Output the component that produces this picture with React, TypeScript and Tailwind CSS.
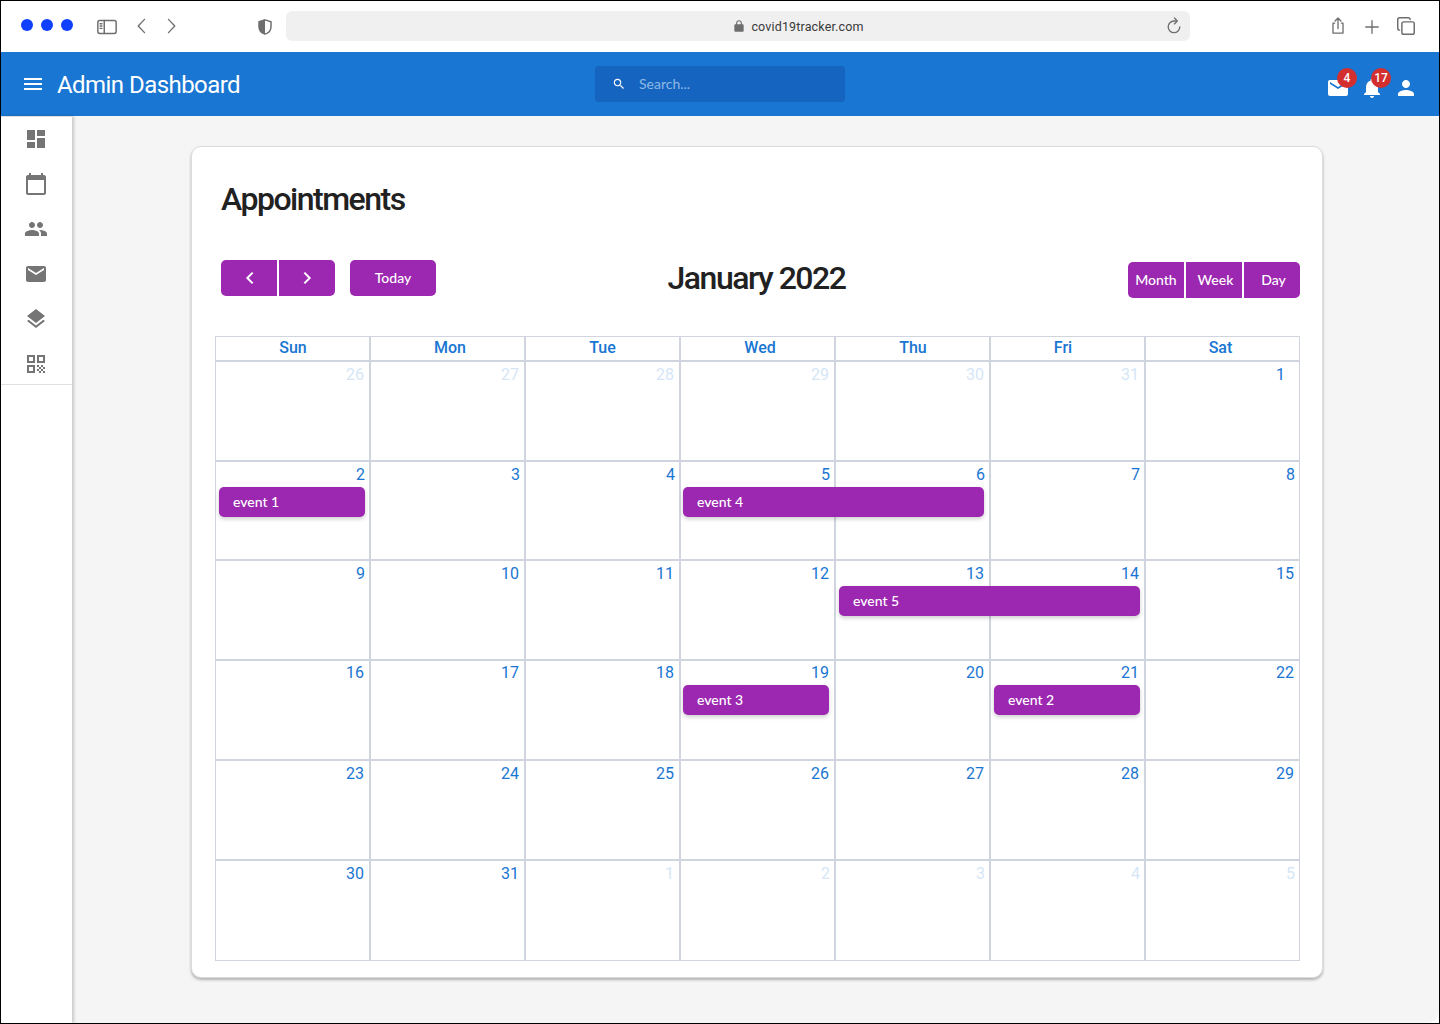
const ROBOTO = "font-['Roboto',sans-serif]"
const LATO = "font-['Lato',sans-serif]"

const ICONS = {
  dashboard: "M3 13h8V3H3v10zm0 8h8v-6H3v6zm10 0h8V11h-8v10zm0-18v6h8V3h-8z",
  calendar: "M20 3h-1V1h-2v2H7V1H5v2H4c-1.1 0-2 .9-2 2v16c0 1.1.9 2 2 2h16c1.1 0 2-.9 2-2V5c0-1.1-.9-2-2-2zm0 18H4V8h16v13z",
  people: "M16 11c1.66 0 2.99-1.34 2.99-3S17.66 5 16 5c-1.66 0-3 1.34-3 3s1.34 3 3 3zm-8 0c1.66 0 2.99-1.34 2.99-3S9.66 5 8 5C6.34 5 5 6.34 5 8s1.34 3 3 3zm0 2c-2.33 0-7 1.17-7 3.5V19h14v-2.5c0-2.33-4.67-3.5-7-3.5zm8 0c-.29 0-.62.02-.97.05 1.16.84 1.97 1.97 1.97 3.45V19h6v-2.5c0-2.33-4.67-3.5-7-3.5z",
  mail: "M20 4H4c-1.1 0-1.99.9-1.99 2L2 18c0 1.1.9 2 2 2h16c1.1 0 2-.9 2-2V6c0-1.1-.9-2-2-2zm0 4l-8 5-8-5V6l8 5 8-5v2z",
  layers: "M11.99 18.54l-7.37-5.73L3 14.07l9 7 9-7-1.63-1.27-7.38 5.74zM12 16l7.36-5.73L21 9l-9-7-9 7 1.63 1.27L12 16z",
  qr: "M3 11h8V3H3v8zm2-6h4v4H5V5zM3 21h8v-8H3v8zm2-6h4v4H5v-4zM13 3v8h8V3h-8zm6 6h-4V5h4v4zM19 19h2v2h-2zM13 13h2v2h-2zM15 15h2v2h-2zM13 17h2v2h-2zM15 19h2v2h-2zM17 17h2v2h-2zM17 13h2v2h-2zM19 15h2v2h-2z",
  bell: "M12 22c1.1 0 2-.9 2-2h-4c0 1.1.89 2 2 2zm6-6v-5c0-3.07-1.64-5.64-4.5-6.32V4c0-.83-.67-1.5-1.5-1.5s-1.5.67-1.5 1.5v.68C7.63 5.36 6 7.92 6 11v5l-2 2v1h16v-1l-2-2z",
  person: "M12 12c2.21 0 4-1.79 4-4s-1.79-4-4-4-4 1.79-4 4 1.79 4 4 4zm0 2c-2.67 0-8 1.34-8 4v2h16v-2c0-2.66-5.33-4-8-4z",
  search: "M15.5 14h-.79l-.28-.27C15.41 12.59 16 11.11 16 9.5 16 5.91 13.09 3 9.5 3S3 5.91 3 9.5 5.91 16 9.5 16c1.61 0 3.09-.59 4.23-1.57l.27.28v.79l5 4.99L20.49 19l-4.99-5zm-6 0C7.01 14 5 11.99 5 9.5S7.01 5 9.5 5 14 7.01 14 9.5 11.99 14 9.5 14z",
  menu: "M3 18h18v-2H3v2zm0-5h18v-2H3v2zm0-7v2h18V6H3z",
}

function Icon({ d, className }: { d: string; className: string }) {
  return (
    <svg viewBox="0 0 24 24" fill="currentColor" className={className}>
      <path d={d} />
    </svg>
  )
}

function Stroke({ children, className }: { children: React.ReactNode; className: string }) {
  return (
    <svg viewBox="0 0 24 24" fill="none" stroke="currentColor" strokeWidth="1.6" strokeLinecap="round" strokeLinejoin="round" className={className}>
      {children}
    </svg>
  )
}

function BrowserBar() {
  return (
    <div className="h-[51px] shrink-0 flex items-center bg-white text-[#6e6e6e]">
      <div className="flex gap-2 ml-5 -mt-1">
        <span className="w-3 h-3 rounded-full bg-[#0f40ff]" />
        <span className="w-3 h-3 rounded-full bg-[#0f40ff]" />
        <span className="w-3 h-3 rounded-full bg-[#0f40ff]" />
      </div>
      <Stroke className="w-[22px] h-[22px] ml-[23px]">
        <rect x="2" y="5" width="20" height="14" rx="2" />
        <path d="M9 5v14M4.5 8.5h2M4.5 11h2M4.5 13.5h2" />
      </Stroke>
      <Stroke className="w-[20px] h-[20px] ml-[14px] -mt-px">
        <path d="M15 4l-7.5 8 7.5 8" />
      </Stroke>
      <Stroke className="w-[20px] h-[20px] ml-[9px] -mt-px">
        <path d="M9 4l7.5 8-7.5 8" />
      </Stroke>
      <svg viewBox="0 0 24 24" className="w-[18px] h-[18px] ml-[75px]">
        <path d="M12 2.5l8 2.5v6.5c0 5-3.4 8.4-8 10-4.6-1.6-8-5-8-10V5z" fill="none" stroke="currentColor" strokeWidth="2" />
        <path d="M12 2.5l-8 2.5v6.5c0 5 3.4 8.4 8 10z" fill="currentColor" />
      </svg>
      <div className="relative w-[904px] h-[30px] ml-[12px] -mt-[1px] rounded-md bg-[#f0f0f0] flex items-center justify-center pl-[114px]">
        <svg viewBox="0 0 24 24" fill="currentColor" className="w-[14px] h-[14px] mr-[5px] ml-[6px]">
          <path d="M18 9h-1V7c0-2.76-2.24-5-5-5S7 4.24 7 7v2H6c-1.1 0-2 .9-2 2v9c0 1.1.9 2 2 2h12c1.1 0 2-.9 2-2v-9c0-1.1-.9-2-2-2zM9 9V7c0-1.66 1.34-3 3-3s3 1.34 3 3v2H9z" />
        </svg>
        <span className={`${ROBOTO} text-[12.5px] text-[#3a3a3a] tracking-[0.15px] mt-[2px]`}>covid19tracker.com</span>
        <Stroke className="absolute right-[6px] top-[5px] w-[20px] h-[20px]">
          <path d="M19 13a7 7 0 1 1-7-7h3" />
          <path d="M12.5 2.5L16 6l-3.5 3.5" />
        </Stroke>
      </div>
      <Stroke className="w-[20px] h-[20px] ml-[138px] -mt-[2px]">
        <path d="M8 8.5H6v12h12v-12h-2M12 15V2.5M8.5 6L12 2.5 15.5 6" />
      </Stroke>
      <Stroke className="w-[20px] h-[20px] ml-[14px]">
        <path d="M12 4.5v15M4.5 12h15" />
      </Stroke>
      <Stroke className="w-[22px] h-[22px] ml-[13px] -mt-[1px]">
        <rect x="7.5" y="7.5" width="13.5" height="13.5" rx="2" />
        <path d="M5 16.5c-1.2 0-2-.8-2-2V5c0-1.2.8-2 2-2h9.5c1.2 0 2 .8 2 2" />
      </Stroke>
    </div>
  )
}

function Badge({ n, className }: { n: number; className: string }) {
  return (
    <span className={`absolute ${className} min-w-5 h-5 rounded-full bg-[#d32f2f] text-white text-[12px] font-medium leading-5 text-center`}>
      {n}
    </span>
  )
}

function AppBar() {
  return (
    <div className={`h-[64px] shrink-0 flex items-center bg-[#1976d2] text-white ${ROBOTO}`}>
      <div className="w-[594px] flex items-center pl-[20px]">
        <Icon d={ICONS.menu} className="w-6 h-6" />
        <span className="ml-[12px] mt-px text-[24px] leading-8 tracking-[-0.55px]">Admin Dashboard</span>
      </div>
      <div className={`w-[250px] h-9 -mt-[1px] rounded bg-[#1565c0] flex items-center pl-[17px] ${LATO}`}>
        <Icon d={ICONS.search} className="w-[14px] h-[14px]" />
        <span className="ml-[13px] text-[14px] text-[#8fb8e6]">Search...</span>
      </div>
      <div className="relative ml-[481px] mt-[8px] w-6 h-6">
        <Icon d={ICONS.mail} className="w-6 h-6" />
        <Badge n={4} className="-top-[8px] left-[11px]" />
      </div>
      <div className="relative ml-[10px] mt-[8px] w-6 h-6">
        <Icon d={ICONS.bell} className="w-6 h-6" />
        <Badge n={17} className="-top-[8px] left-[11px]" />
      </div>
      <div className="ml-[10px] mt-[8px] w-6 h-6">
        <Icon d={ICONS.person} className="w-6 h-6" />
      </div>
    </div>
  )
}

function Sidebar() {
  const items = [ICONS.dashboard, ICONS.calendar, ICONS.people, ICONS.mail, ICONS.layers, ICONS.qr]
  return (
    <div className="w-[71px] shrink-0 bg-white shadow-[2px_0_3px_rgba(0,0,0,0.18)] border-t border-[#e0e0e0] z-10">
      <div className="flex flex-col items-center pt-[10px] pr-[2px] h-[268px] border-b border-[#e0e0e0] gap-[21px]">
        {items.map((d) => (
          <Icon key={d} d={d} className="w-6 h-6 text-[#757575]" />
        ))}
      </div>
    </div>
  )
}

function PurpleButton({ className, children }: { className: string; children: React.ReactNode }) {
  return (
    <div className={`bg-[#9c27b0] text-white flex items-center justify-center ${LATO} text-[14px] font-medium ${className}`}>
      {children}
    </div>
  )
}

type Day = { n: number; muted?: boolean; pr?: string }

const WEEKS: Day[][] = [
  [{ n: 26, muted: true }, { n: 27, muted: true }, { n: 28, muted: true }, { n: 29, muted: true }, { n: 30, muted: true }, { n: 31, muted: true }, { n: 1, pr: "pr-[14px]" }],
  [{ n: 2 }, { n: 3 }, { n: 4 }, { n: 5 }, { n: 6 }, { n: 7 }, { n: 8 }],
  [{ n: 9 }, { n: 10 }, { n: 11 }, { n: 12 }, { n: 13 }, { n: 14 }, { n: 15 }],
  [{ n: 16 }, { n: 17 }, { n: 18 }, { n: 19 }, { n: 20 }, { n: 21 }, { n: 22 }],
  [{ n: 23 }, { n: 24 }, { n: 25 }, { n: 26 }, { n: 27 }, { n: 28 }, { n: 29 }],
  [{ n: 30 }, { n: 31 }, { n: 1, muted: true, pr: "pr-[5px]" }, { n: 2, muted: true }, { n: 3, muted: true }, { n: 4, muted: true }, { n: 5, muted: true }],
]

const COLS = ["col-start-1", "col-start-2", "col-start-3", "col-start-4", "col-start-5", "col-start-6", "col-start-7"]
const TRACK = "grid-cols-[153px_155px_155px_155px_155px_155px_155px]"

const EVENTS: { week: number; title: string; col: string }[] = [
  { week: 1, title: "event 1", col: "col-start-1 col-span-1 ml-[3px] mr-[4px] mt-[25px]" },
  { week: 1, title: "event 4", col: "col-start-4 col-span-2 ml-[4px] mr-[5px] mt-[25px]" },
  { week: 2, title: "event 5", col: "col-start-5 col-span-2 ml-[5px] mr-[4px] mt-[25px]" },
  { week: 3, title: "event 3", col: "col-start-4 col-span-1 ml-[4px] mr-[5px] mt-[24px]" },
  { week: 3, title: "event 2", col: "col-start-6 col-span-1 ml-[5px] mr-[4px] mt-[24px]" },
]

const HEADS: [string, string][] = [
  ["Sun", "pl-[1px]"],
  ["Mon", "pl-[5px]"],
  ["Tue", ""],
  ["Wed", "pl-[5px]"],
  ["Thu", "pl-[1px]"],
  ["Fri", "pr-[9px]"],
  ["Sat", "pr-[4px]"],
]

function Calendar() {
  return (
    <div className={`w-[1085px] border border-[#d0d4de] ${ROBOTO} text-[#1976d2]`}>
      <div className={`grid ${TRACK} h-[25px] border-b-2 border-[#d0d4de]`}>
        {HEADS.map(([h, pad], i) => (
          <div key={h} className={`${i > 0 ? "border-l-2 border-[#d0d4de]" : ""} ${pad} text-center text-[16px] font-medium leading-[22px]`}>
            {h}
          </div>
        ))}
      </div>
      {WEEKS.map((week, w) => (
        <div key={w} className={`grid ${TRACK} ${w === 1 || w === 5 ? "h-[99px]" : "h-[100px]"} ${w < 5 ? "border-b-2 border-[#d0d4de]" : ""}`}>
          {week.map((d, i) => (
            <div
              key={i}
              className={`${COLS[i]} row-start-1 ${w === 3 ? "" : "pt-px"} text-right text-[16px] leading-[24px] ${d.pr ?? (d.n < 10 ? "pr-[4px]" : "pr-[5px]")} ${i > 0 ? "border-l-2 border-[#d0d4de]" : ""} ${d.muted ? "text-[#d5e6f7]" : ""}`}
            >
              {d.n}
            </div>
          ))}
          {EVENTS.filter((e) => e.week === w).map((e) => (
            <div
              key={e.title}
              className={`${e.col} row-start-1 self-start h-[30px] rounded-[5px] bg-[#9c27b0] pl-[14px] text-white text-[14px] font-medium leading-[30px] shadow-[0_2px_4px_rgba(0,0,0,0.2)] ${LATO}`}
            >
              {e.title}
            </div>
          ))}
        </div>
      ))}
    </div>
  )
}

export default function App() {
  return (
    <div className="w-[1440px] h-[1024px] overflow-hidden bg-black p-px">
      <div className="h-full bg-white">
        <div className="h-full flex flex-col rounded-tr-[12px] rounded-br-[12px] overflow-hidden bg-[#f5f5f5]">
          <BrowserBar />
          <AppBar />
          <div className="flex flex-1 min-h-0">
            <Sidebar />
            <div className="flex-1 pl-[119px] pt-[30px]">
              <div className="w-[1132px] h-[832px] rounded-[10px] bg-white pl-[23px] border border-[#dcdcdc] shadow-[0_2px_3px_rgba(0,0,0,0.28)]">
                <h1 className={`${ROBOTO} text-[32px] font-medium leading-10 tracking-[-1.5px] text-[#212121] ml-[6px] mt-[32px]`}>Appointments</h1>
                <div className="grid grid-cols-[1fr_auto_1fr] w-[1085px] h-[77px] mt-[40px] items-start">
                  <div className="flex ml-[6px] mt-[1px]">
                    <PurpleButton className="w-14 h-9 pl-px rounded-l-[5px]">
                      <svg viewBox="0 0 24 24" fill="none" stroke="currentColor" strokeWidth="3" className="w-4 h-4"><path d="M16 4l-8 8 8 8" /></svg>
                    </PurpleButton>
                    <PurpleButton className="w-14 h-9 ml-[2px] rounded-r-[5px]">
                      <svg viewBox="0 0 24 24" fill="none" stroke="currentColor" strokeWidth="3" className="w-4 h-4"><path d="M8 4l8 8-8 8" /></svg>
                    </PurpleButton>
                    <PurpleButton className="w-[86px] h-9 ml-[15px] pb-[2px] rounded-[5px]">Today</PurpleButton>
                  </div>
                  <div className={`${ROBOTO} text-[32px] font-medium tracking-[-1.5px] text-[#212121] leading-10 -ml-[2px] -mt-[1px]`}>January 2022</div>
                  <div className="flex justify-end mt-[3px]">
                    <PurpleButton className="w-14 h-9 pb-[2px] rounded-l-[5px]">Month</PurpleButton>
                    <PurpleButton className="w-14 h-9 pb-[2px] pl-[3px] ml-[2px]">Week</PurpleButton>
                    <PurpleButton className="w-14 h-9 pb-[2px] pl-[3px] ml-[2px] rounded-r-[5px]">Day</PurpleButton>
                  </div>
                </div>
                <Calendar />
              </div>
            </div>
          </div>
        </div>
      </div>
    </div>
  )
}
